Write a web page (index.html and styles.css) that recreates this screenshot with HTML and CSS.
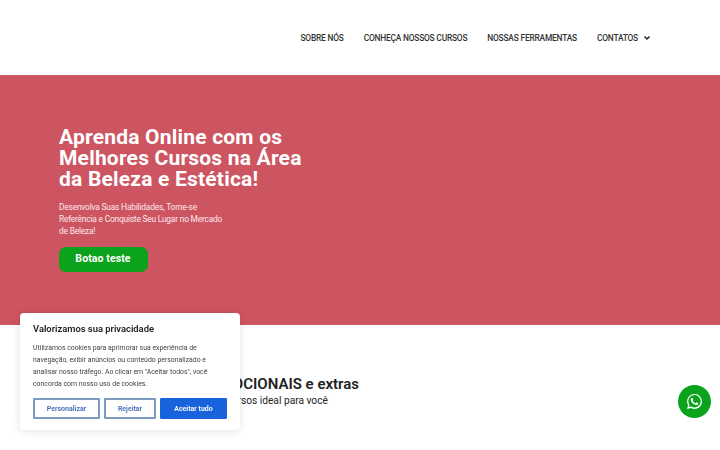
FILE: index.html
```html
<!DOCTYPE html>
<html lang="pt-BR">
<head>
  <meta charset="UTF-8" />
  <meta name="viewport" content="width=device-width, initial-scale=1" />
  <title>Cursos de Beleza e Estética</title>
  <link rel="stylesheet" href="styles.css">
</head>
<body>
  <header class="topbar">
    <nav class="menu">
      <a href="#">SOBRE NÓS</a>
      <a href="#">CONHEÇA NOSSOS CURSOS</a>
      <a href="#">NOSSAS FERRAMENTAS</a>
      <a href="#" class="has-sub">CONTATOS
        <svg viewBox="0 0 10 10" xmlns="http://www.w3.org/2000/svg">
          <path d="M2.5 3.5 L5 6 L7.5 3.5" fill="none" stroke="#222" stroke-width="1.5"/>
        </svg>
      </a>
    </nav>
  </header>

  <section class="hero">
    <h1>Aprenda Online com os Melhores Cursos na Área da Beleza e Estética!</h1>
    <p>Desenvolva Suas Habilidades, Torne-se Referência e Conquiste Seu Lugar no Mercado de Beleza!</p>
    <a href="#" class="hero-btn">Botao teste</a>
  </section>

  <section class="promo">
    <div class="promo-text">
      <h2>Cursos PROMOCIONAIS e extras</h2>
      <p>Encontre os cursos ideal para você</p>
    </div>
  </section>

  <div class="cookie">
    <div class="cookie-title">Valorizamos sua privacidade</div>
    <p>Utilizamos cookies para aprimorar sua experiência de navegação, exibir anúncios ou conteúdo personalizado e analisar nosso tráfego. Ao clicar em "Aceitar todos", você concorda com nosso uso de cookies.</p>
    <div class="cookie-btns">
      <button class="btn-outline btn-custom">Personalizar</button>
      <button class="btn-outline btn-reject">Rejeitar</button>
      <button class="btn-accept">Aceitar tudo</button>
    </div>
  </div>

  <a href="#" class="whats">
    <svg viewBox="0 0 24 24" xmlns="http://www.w3.org/2000/svg">
      <path fill="#fff" d="M17.47 14.38c-.3-.15-1.76-.87-2.03-.97-.27-.1-.47-.15-.67.15-.2.3-.77.97-.94 1.16-.17.2-.35.22-.64.07-.3-.15-1.26-.46-2.39-1.47-.88-.79-1.48-1.76-1.65-2.06-.17-.3-.02-.46.13-.6.13-.14.3-.35.45-.52.15-.17.2-.3.3-.5.1-.2.05-.37-.03-.52-.07-.15-.67-1.61-.92-2.21-.24-.58-.49-.5-.67-.51h-.57c-.2 0-.52.07-.79.37-.27.3-1.04 1.02-1.04 2.48s1.07 2.88 1.21 3.07c.15.2 2.1 3.2 5.08 4.49.71.3 1.26.49 1.69.62.71.23 1.36.2 1.87.12.57-.09 1.76-.72 2.01-1.42.25-.7.25-1.29.17-1.42-.07-.12-.27-.2-.57-.35zM12.05 21.5h-.01a9.87 9.87 0 0 1-5.03-1.38l-.36-.21-3.74.98 1-3.65-.24-.37a9.86 9.86 0 0 1-1.51-5.26c0-5.45 4.44-9.88 9.89-9.88 2.64 0 5.12 1.03 6.99 2.9a9.83 9.83 0 0 1 2.89 7c0 5.45-4.44 9.87-9.88 9.87zm8.41-18.3A11.82 11.82 0 0 0 12.05 0C5.5 0 .16 5.34.16 11.89c0 2.1.55 4.14 1.59 5.95L.06 24l6.3-1.65a11.88 11.88 0 0 0 5.68 1.45h.01c6.55 0 11.89-5.34 11.89-11.89 0-3.18-1.24-6.16-3.48-8.41z"/>
    </svg>
  </a>
</body>
</html>
```

FILE: styles.css
```css
* {
  box-sizing: border-box;
}
body, html {
  margin: 0;
  padding: 0;
  font-family: "Roboto", "Liberation Sans", sans-serif;
  background-color: #fff;
  color: #222;
  overflow: hidden;
}
.topbar {
  height: 75px;
  display: flex;
  justify-content: flex-end;
  align-items: center;
  padding-right: 68px;
}
.menu {
  display: flex;
  gap: 20px;
}
.menu a {
  font-size: 8.4px;
  font-weight: 500;
  letter-spacing: -0.2px;
  color: #333;
  text-decoration: none;
  display: flex;
  align-items: center;
}
.has-sub svg {
  width: 10px;
  height: 10px;
  margin-left: 4px;
}
.hero {
  height: 250px;
  background-color: #cd5461;
  padding: 52px 0 0 59px;
  color: #fff;
}
.hero h1 {
  width: 250px;
  margin: 0 0 11px 0;
  font-size: 21px;
  line-height: 21px;
  font-weight: 700;
  letter-spacing: 0.2px;
}
.hero p {
  width: 170px;
  margin: 0 0 10px 0;
  font-size: 8.4px;
  line-height: 12px;
  letter-spacing: -0.2px;
  color: #fbe9eb;
}
.hero-btn {
  display: block;
  width: 89px;
  height: 25px;
  margin-left: -0.5px;
  line-height: 24px;
  border-radius: 7px;
  background-color: #0ca31c;
  color: #fff;
  text-align: center;
  font-size: 10.5px;
  font-weight: 700;
  letter-spacing: 0.1px;
  text-decoration: none;
}
.promo {
  padding: 50px 0 0 139px;
}
.promo-text {
  width: fit-content;
  text-align: center;
}
.promo h2 {
  margin: 0;
  font-size: 15px;
  line-height: 18px;
  font-weight: 600;
}
.promo p {
  margin: 1px 0 0 0;
  font-size: 10.2px;
  line-height: 14px;
}
.cookie {
  position: fixed;
  left: 20px;
  top: 313px;
  width: 220px;
  height: 117px;
  background: #fff;
  border-radius: 4px;
  box-shadow: 0 1px 8px rgba(0, 0, 0, 0.12);
  padding: 10px 13px;
}
.cookie-title {
  font-size: 9.4px;
  line-height: 12px;
  font-weight: 600;
  margin-bottom: 7px;
}
.cookie p {
  margin: 0 0 8px 0;
  font-size: 6.9px;
  line-height: 12px;
  color: #444;
}
.cookie-btns {
  display: flex;
  gap: 4px;
}
.cookie-btns button {
  height: 21px;
  padding: 0;
  border-radius: 1px;
  font-family: inherit;
  font-size: 7px;
  font-weight: 600;
}
.btn-outline {
  background: #fff;
  border: 2px solid #7b9cc0;
  color: #3f6db5;
}
.btn-custom {
  width: 67px;
}
.btn-reject {
  width: 52px;
}
.btn-accept {
  width: 67px;
  background: #1863dc;
  border: 1px solid #1863dc;
  color: #fff;
}
.whats {
  position: fixed;
  left: 678px;
  top: 385px;
  width: 33px;
  height: 33px;
  border-radius: 50%;
  background-color: #0ca31c;
  display: flex;
  align-items: center;
  justify-content: center;
}
.whats svg {
  width: 15px;
  height: 15px;
}
```
